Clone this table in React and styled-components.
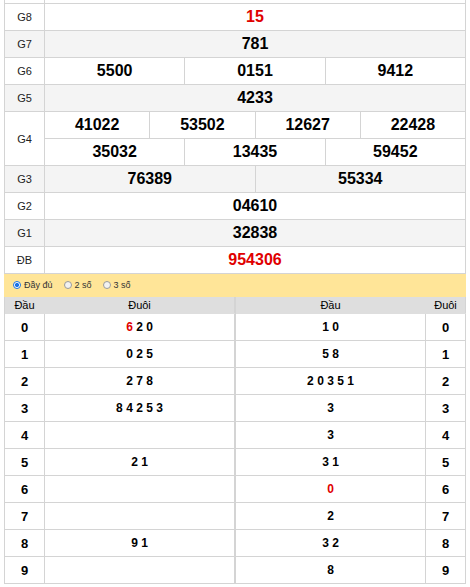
import React from "react";
import styled, { createGlobalStyle } from "styled-components";

const Global = createGlobalStyle`
  html, body { margin: 0; padding: 0; background: #fff; }
  body { font-family: "Liberation Sans", Arial, sans-serif; color: #000; overflow: hidden; }
`;

const BORDER = "#d4d4d4";

const Wrapper = styled.div`
  width: 462px;
  margin: -23px 0 0 4px;
`;

const PrizeTable = styled.div`
  border-left: 1px solid ${BORDER};
  display: flex;
  flex-direction: column;
`;

const PrizeRow = styled.div`
  display: flex;
  background: ${(p) => (p.$alt ? "#f4f4f4" : "#fff")};
  border-bottom: 1px solid ${BORDER};
`;

const Label = styled.div`
  width: 40px;
  flex: none;
  box-sizing: border-box;
  border-right: 1px solid ${BORDER};
  display: flex;
  align-items: center;
  justify-content: center;
  font-size: 11px;
  color: #222;
`;

const Values = styled.div`
  flex: 1;
  display: flex;
  flex-direction: column;
`;

const ValueLine = styled.div`
  display: flex;
  & + & { border-top: 1px solid ${BORDER}; }
`;

const Value = styled.div`
  flex: 1 1 0;
  height: 26px;
  box-sizing: border-box;
  border-right: 1px solid ${BORDER};
  display: flex;
  align-items: center;
  justify-content: center;
  font-size: 16px;
  font-weight: bold;
  color: ${(p) => (p.$red ? "#e00000" : "#000")};
`;

const RadioBar = styled.div`
  height: 23px;
  background: #ffe598;
  display: flex;
  align-items: center;
  padding-left: 9px;
  padding-bottom: 1px;
  box-sizing: border-box;
  font-size: 9px;
  color: #333;
`;

const Option = styled.label`
  display: flex;
  align-items: center;
  margin-right: 11px;
`;

const Dot = styled.span`
  width: 8px;
  height: 8px;
  box-sizing: border-box;
  border-radius: 50%;
  margin-right: 3px;
  border: 1px solid ${(p) => (p.$on ? "#1a73e8" : "#9a9a9a")};
  background: ${(p) =>
    p.$on ? "radial-gradient(circle, #1a73e8 0 2px, #fff 2.2px)" : "#f2f2f2"};
`;

const LotoArea = styled.div`
  display: flex;
`;

const LotoTable = styled.div`
  width: 50%;
  border-left: 1px solid ${BORDER};
  box-sizing: border-box;
`;

const LotoRow = styled.div`
  display: flex;
  height: ${(p) => (p.$head ? "17px" : "27px")};
  box-sizing: border-box;
  border-bottom: 1px solid ${(p) => (p.$head ? "#dedede" : BORDER)};
  background: ${(p) => (p.$head ? "#dedede" : "#fff")};
`;

const LotoCell = styled.div`
  box-sizing: border-box;
  ${(p) => (p.$narrow ? "width: 40px; flex: none;" : "flex: 1;")}
  border-right: 1px solid ${(p) => (p.$head && !p.$edge ? "#dedede" : BORDER)};
  display: flex;
  align-items: center;
  justify-content: center;
  font-size: ${(p) => (p.$head ? "11px" : p.$narrow ? "13px" : "12px")};
  font-weight: ${(p) => (p.$head ? "normal" : "bold")};
  color: #000;
`;

const Digits = styled.span`
  white-space: pre;
`;

const Red = styled.span`
  color: #e00000;
`;

const prizes = [
  { label: "", values: [[""]] },
  { label: "G8", values: [["15"]], red: true },
  { label: "G7", values: [["781"]] },
  { label: "G6", values: [["5500", "0151", "9412"]] },
  { label: "G5", values: [["4233"]] },
  { label: "G4", values: [["41022", "53502", "12627", "22428"], ["35032", "13435", "59452"]] },
  { label: "G3", values: [["76389", "55334"]] },
  { label: "G2", values: [["04610"]] },
  { label: "G1", values: [["32838"]] },
  { label: "ĐB", values: [["954306"]], red: true },
];

const left = [
  [["6", true], ["2"], ["0"]],
  [["0"], ["2"], ["5"]],
  [["2"], ["7"], ["8"]],
  [["8"], ["4"], ["2"], ["5"], ["3"]],
  [],
  [["2"], ["1"]],
  [],
  [],
  [["9"], ["1"]],
  [],
];

const right = [
  [["1"], ["0"]],
  [["5"], ["8"]],
  [["2"], ["0"], ["3"], ["5"], ["1"]],
  [["3"]],
  [["3"]],
  [["3"], ["1"]],
  [["0", true]],
  [["2"]],
  [["3"], ["2"]],
  [["8"]],
];

const renderParts = (parts) => (
  <Digits>
    {parts.map(([t, r], i) => (
      <React.Fragment key={i}>
        {i > 0 ? " " : ""}
        {r ? <Red>{t}</Red> : t}
      </React.Fragment>
    ))}
  </Digits>
);

export default function App() {
  return (
    <>
      <Global />
      <Wrapper>
        <PrizeTable>
          {prizes.map((p, i) => (
            <PrizeRow key={i} $alt={i % 2 === 0 && i > 0}>
              <Label>{p.label}</Label>
              <Values>
                {p.values.map((line, j) => (
                  <ValueLine key={j}>
                    {line.map((v, k) => (
                      <Value key={k} $red={p.red}>
                        {v}
                      </Value>
                    ))}
                  </ValueLine>
                ))}
              </Values>
            </PrizeRow>
          ))}
        </PrizeTable>
        <RadioBar>
          <Option>
            <Dot $on />
            Đầy đủ
          </Option>
          <Option>
            <Dot />2 số
          </Option>
          <Option>
            <Dot />3 số
          </Option>
        </RadioBar>
        <LotoArea>
          <LotoTable>
            <LotoRow $head>
              <LotoCell $head $narrow>Đầu</LotoCell>
              <LotoCell $head $edge>Đuôi</LotoCell>
            </LotoRow>
            {left.map((parts, i) => (
              <LotoRow key={i}>
                <LotoCell $narrow>{i}</LotoCell>
                <LotoCell>{renderParts(parts)}</LotoCell>
              </LotoRow>
            ))}
          </LotoTable>
          <LotoTable>
            <LotoRow $head>
              <LotoCell $head>Đầu</LotoCell>
              <LotoCell $head $narrow $edge>Đuôi</LotoCell>
            </LotoRow>
            {right.map((parts, i) => (
              <LotoRow key={i}>
                <LotoCell>{renderParts(parts)}</LotoCell>
                <LotoCell $narrow>{i}</LotoCell>
              </LotoRow>
            ))}
          </LotoTable>
        </LotoArea>
      </Wrapper>
    </>
  );
}
